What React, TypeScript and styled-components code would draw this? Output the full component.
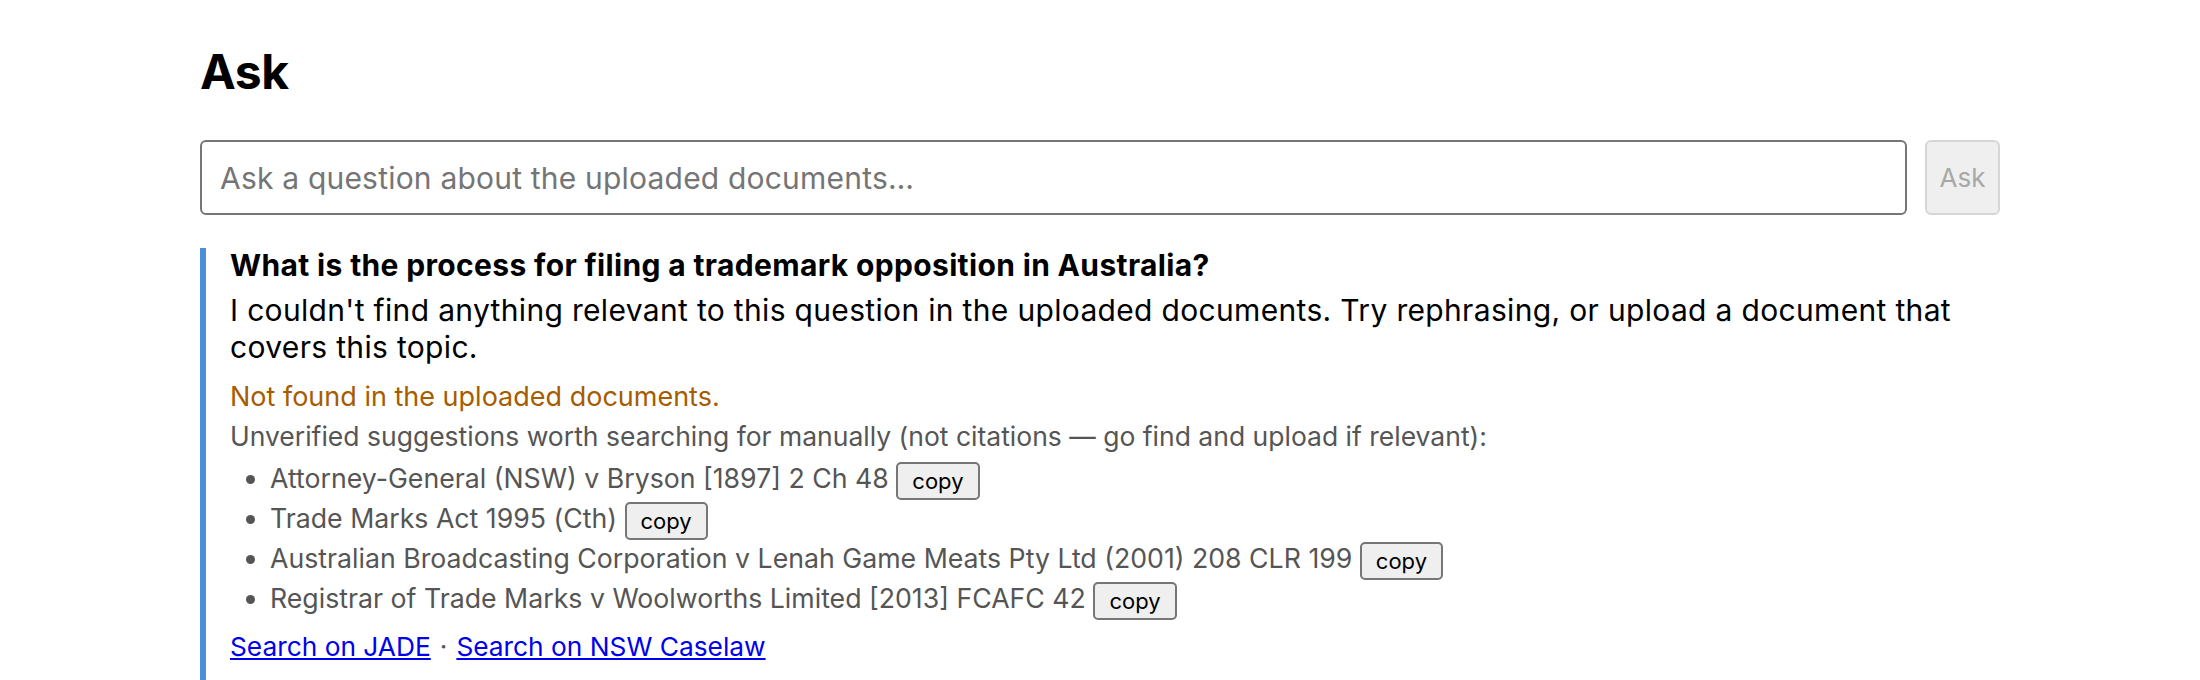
import React from "react";
import styled, { createGlobalStyle } from "styled-components";

const GlobalStyle = createGlobalStyle`
  html, body {
    margin: 0;
    padding: 0;
    background: #fff;
  }
  body {
    font-family: Inter, "Liberation Sans", Arial, sans-serif;
    color: #000;
  }
`;

const suggestions = [
  "Attorney-General (NSW) v Bryson [1897] 2 Ch 48",
  "Trade Marks Act 1995 (Cth)",
  "Australian Broadcasting Corporation v Lenah Game Meats Pty Ltd (2001) 208 CLR 199",
  "Registrar of Trade Marks v Woolworths Limited [2013] FCAFC 42",
];

export default function App() {
  return (
    <>
      <GlobalStyle />
      <Page>
        <Title>Ask</Title>
        <AskRow>
          <QuestionInput placeholder="Ask a question about the uploaded documents…" />
          <AskButton disabled>Ask</AskButton>
        </AskRow>

        <AnswerCard>
          <Question>What is the process for filing a trademark opposition in Australia?</Question>
          <AnswerText>
            I couldn't find anything relevant to this question in the uploaded documents. Try
            rephrasing, or upload a document that covers this topic.
          </AnswerText>
          <NotFound>Not found in the uploaded documents.</NotFound>
          <Hint>
            Unverified suggestions worth searching for manually (not citations — go find and
            upload if relevant):
          </Hint>
          <SuggestionList>
            {suggestions.map((s) => (
              <Suggestion key={s}>
                {s} <CopyButton>copy</CopyButton>
              </Suggestion>
            ))}
          </SuggestionList>
          <Links>
            <Link href="#">Search on JADE</Link>
            <Dot>·</Dot>
            <Link href="#">Search on NSW Caselaw</Link>
          </Links>
        </AnswerCard>
      </Page>
    </>
  );
}

const Page = styled.main`
  max-width: 1800px;
  margin: 0 auto;
`;

const Title = styled.h1`
  margin: 42px 0 0;
  font-size: 48px;
  line-height: 60px;
  font-weight: 700;
  letter-spacing: -0.5px;
`;

const AskRow = styled.div`
  display: flex;
  align-items: stretch;
  gap: 18px;
  margin-top: 38px;
  height: 75px;
`;

const QuestionInput = styled.input`
  flex: 1;
  box-sizing: border-box;
  height: 75px;
  padding: 0 18px;
  border: 2px solid #767676;
  border-radius: 6px;
  font-family: Inter, "Liberation Sans", Arial, sans-serif;
  font-size: 30px;
  letter-spacing: 0.2px;
  color: #000;
  outline: none;

  &::placeholder {
    color: #757575;
  }
`;

const AskButton = styled.button`
  box-sizing: border-box;
  width: 75px;
  height: 75px;
  padding: 0;
  border: 2px solid #d6d6d6;
  border-radius: 6px;
  background: #efefef;
  color: #a8a8a8;
  font-family: Inter, "Liberation Sans", Arial, sans-serif;
  font-size: 26px;
`;

const AnswerCard = styled.section`
  margin-top: 33px;
  padding: 0 0 80px 24px;
  border-left: 6px solid #4a90d9;
`;

const Question = styled.div`
  font-size: 30px;
  line-height: 34px;
  font-weight: 700;
  letter-spacing: 0.35px;
`;

const AnswerText = styled.p`
  margin: 10px 0 0;
  font-size: 30px;
  line-height: 37px;
  letter-spacing: 0.33px;
`;

const NotFound = styled.div`
  margin-top: 14px;
  font-size: 27px;
  line-height: 34px;
  color: #a65c00;
`;

const Hint = styled.div`
  margin-top: 5px;
  font-size: 26.5px;
  line-height: 34px;
  color: #555;
`;

const SuggestionList = styled.ul`
  margin: 5px 0 0;
  padding-left: 40px;
  color: #555;
  font-size: 26.7px;
`;

const Suggestion = styled.li`
  line-height: 40px;
  height: 40px;
`;

const CopyButton = styled.button`
  box-sizing: border-box;
  height: 38px;
  padding: 0 14px;
  border: 2px solid #767676;
  border-radius: 5px;
  background: #efefef;
  color: #000;
  font-family: Inter, "Liberation Sans", Arial, sans-serif;
  font-size: 22px;
  vertical-align: middle;
`;

const Links = styled.div`
  margin-top: 12px;
  font-size: 26.3px;
  line-height: 34px;
  color: #555;
`;

const Link = styled.a`
  color: #0000ee;
`;

const Dot = styled.span`
  margin: 0 9px;
`;
